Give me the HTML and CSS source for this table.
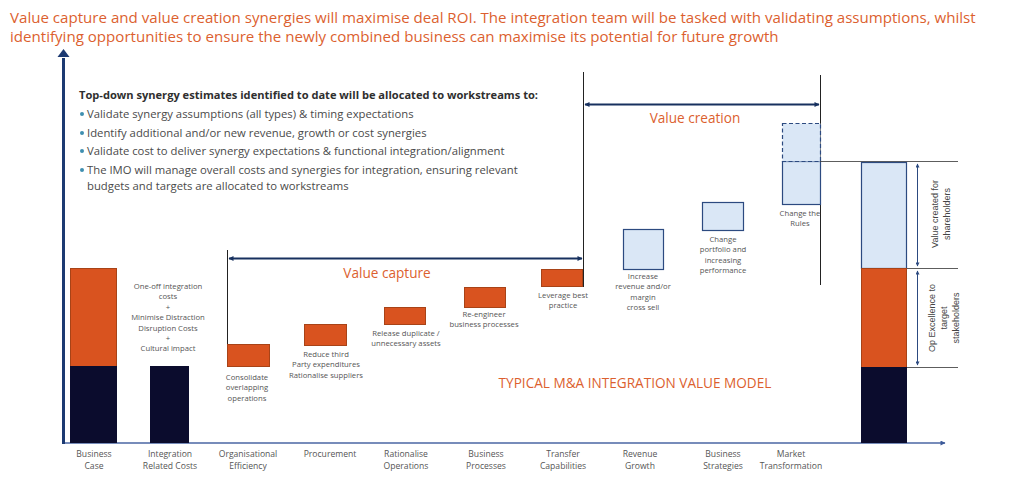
FILE: index.html
```html
<!DOCTYPE html>
<html lang="en">
<head>
<meta charset="utf-8">
<title>Typical M&amp;A Integration Value Model</title>
<link rel="stylesheet" href="styles.css">
</head>
<body>
<div class="page">
  <header class="headline">
    <p>Value capture and value creation synergies will maximise deal ROI. The integration team will be tasked with validating assumptions, whilst<br>identifying opportunities to ensure the newly combined business can maximise its potential for future growth</p>
  </header>
  <section class="chart">
    <svg class="canvas" width="1024" height="431" viewBox="0 0 1024 431" xmlns="http://www.w3.org/2000/svg">
      <defs>
        <marker id="ah" viewBox="0 0 10 10" refX="9" refY="5" markerWidth="7" markerHeight="5" orient="auto-start-reverse" markerUnits="userSpaceOnUse">
          <path d="M0,0 L10,5 L0,10 z" fill="#17305f"/>
        </marker>
        <marker id="ahs" viewBox="0 0 10 10" refX="9" refY="5" markerWidth="5" markerHeight="4" orient="auto-start-reverse" markerUnits="userSpaceOnUse">
          <path d="M0,0 L10,5 L0,10 z" fill="#2c4a80"/>
        </marker>
        <marker id="ax" viewBox="0 0 10 10" refX="9" refY="5" markerWidth="9" markerHeight="5" orient="auto" markerUnits="userSpaceOnUse">
          <path d="M0,0 L10,5 L0,10 z" fill="#3d5a99"/>
        </marker>
      </defs>

      <!-- x axis -->
      <line x1="62" y1="395" x2="945" y2="395" stroke="#4a66a3" stroke-width="1.4" marker-end="url(#ax)"/>
      <!-- y axis -->
      <line x1="63.5" y1="396" x2="63.5" y2="10" stroke="#1c3a72" stroke-width="3"/>
      <path d="M57.5,9 L63.5,1 L69.5,9 z" fill="#1c3a72"/>

      <!-- Business case -->
      <rect class="b-orange" x="70.5" y="220.5" width="46" height="98"/>
      <rect class="b-navy" x="70.5" y="318.5" width="46" height="76"/>
      <!-- Integration costs -->
      <rect class="b-navy" x="150.5" y="318.5" width="38" height="76"/>

      <!-- Value capture bracket -->
      <line x1="227.5" y1="202" x2="227.5" y2="319" stroke="#222" stroke-width="1"/>
      <line x1="229" y1="210.5" x2="582" y2="210.5" stroke="#17305f" stroke-width="2" marker-start="url(#ah)" marker-end="url(#ah)"/>

      <rect class="b-orange" x="227.5" y="296.5" width="42" height="22"/>
      <rect class="b-orange" x="304.5" y="276.5" width="42" height="21"/>
      <rect class="b-orange" x="384.5" y="259.5" width="41" height="17"/>
      <rect class="b-orange" x="464.5" y="239.5" width="41" height="20"/>
      <rect class="b-orange" x="541.5" y="221.5" width="41" height="17"/>

      <!-- Value creation bracket -->
      <line x1="583.5" y1="24" x2="583.5" y2="239" stroke="#222" stroke-width="1"/>
      <line x1="820.5" y1="27" x2="820.5" y2="237" stroke="#222" stroke-width="1"/>
      <line x1="585" y1="56.5" x2="819" y2="56.5" stroke="#17305f" stroke-width="2" marker-start="url(#ah)" marker-end="url(#ah)"/>

      <rect class="b-light" x="623.5" y="181.5" width="40" height="40"/>
      <rect class="b-light" x="702.5" y="154.5" width="41" height="28"/>
      <rect class="b-light" x="782.5" y="113.5" width="38" height="43"/>
      <rect class="b-light" x="782.5" y="75.5" width="38" height="38" stroke-dasharray="4 2.5"/>

      <!-- Right summary bar -->
      <line x1="820" y1="113.5" x2="958" y2="113.5" stroke="#333" stroke-width="0.8"/>
      <line x1="907" y1="220.5" x2="958" y2="220.5" stroke="#333" stroke-width="0.8"/>
      <line x1="907" y1="319.5" x2="958" y2="319.5" stroke="#333" stroke-width="0.8"/>
      <rect class="b-light" x="861.5" y="114.5" width="45" height="106"/>
      <rect class="b-orange" x="861.5" y="220.5" width="45" height="99"/>
      <rect class="b-navy" x="861.5" y="319.5" width="45" height="75"/>
      <line x1="917.5" y1="116" x2="917.5" y2="218" stroke="#2c4a80" stroke-width="1" marker-start="url(#ahs)" marker-end="url(#ahs)"/>
      <line x1="917.5" y1="223" x2="917.5" y2="317" stroke="#2c4a80" stroke-width="1" marker-start="url(#ahs)" marker-end="url(#ahs)"/>
    </svg>

    <div class="notes">
      <p class="notes-title">Top-down synergy estimates identified to date will be allocated to workstreams to:</p>
      <ul>
        <li>Validate synergy assumptions (all types) &amp; timing expectations</li>
        <li>Identify additional and/or new revenue, growth or cost synergies</li>
        <li>Validate cost to deliver synergy expectations &amp; functional integration/alignment</li>
        <li>The IMO will manage overall costs and synergies for integration, ensuring relevant budgets and targets are allocated to workstreams</li>
      </ul>
    </div>

    <div class="band-title t-capture">Value capture</div>
    <div class="band-title t-creation">Value creation</div>
    <div class="band-title t-model">TYPICAL M&amp;A INTEGRATION VALUE MODEL</div>

    <div class="note l-integration">One-off integration<br>costs<br>+<br>Minimise Distraction<br>Disruption Costs<br>+<br>Cultural impact</div>
    <div class="note l-consolidate">Consolidate<br>overlapping<br>operations</div>
    <div class="note l-reduce">Reduce third<br>Party expenditures<br>Rationalise suppliers</div>
    <div class="note l-release">Release duplicate /<br>unnecessary assets</div>
    <div class="note l-reengineer">Re-engineer<br>business processes</div>
    <div class="note l-leverage">Leverage best<br>practice</div>
    <div class="note l-increase">Increase<br>revenue and/or<br>margin<br>cross sell</div>
    <div class="note l-portfolio">Change<br>portfolio and<br>increasing<br>performance</div>
    <div class="note l-rules">Change the<br>Rules</div>

    <div class="side side-value">Value created for<br>shareholders</div>
    <div class="side side-opex">Op Excellence to<br>target<br>stakeholders</div>

    <div class="axis-labels">
      <span class="ax ax-1">Business<br>Case</span>
      <span class="ax ax-2">Integration<br>Related Costs</span>
      <span class="ax ax-3">Organisational<br>Efficiency</span>
      <span class="ax ax-4">Procurement</span>
      <span class="ax ax-5">Rationalise<br>Operations</span>
      <span class="ax ax-6">Business<br>Processes</span>
      <span class="ax ax-7">Transfer<br>Capabilities</span>
      <span class="ax ax-8">Revenue<br>Growth</span>
      <span class="ax ax-9">Business<br>Strategies</span>
      <span class="ax ax-10">Market<br>Transformation</span>
    </div>
  </section>
</div>
</body>
</html>
```

FILE: styles.css
```css
* { box-sizing: border-box; }

html, body {
  margin: 0;
  padding: 0;
  background: #ffffff;
}

body {
  font-family: "Open Sans", "Noto Sans", sans-serif;
  color: #444;
}

.page {
  width: 1024px;
  height: 479px;
  overflow: hidden;
}

.headline {
  height: 48px;
  padding: 8px 0 0 10px;
}

.headline p {
  margin: 0;
  font-size: 15.1px;
  line-height: 19px;
  color: #dc5f2f;
  white-space: nowrap;
}

.chart {
  position: relative;
  height: 431px;
}

.canvas {
  position: absolute;
  left: 0;
  top: 0;
  display: block;
}

.b-orange { fill: #d9531f; stroke: #a84317; stroke-width: 1; }
.b-navy { fill: #0b0c2d; stroke: #0b0c2d; stroke-width: 1; }
.b-light { fill: #dae7f6; stroke: #2c4a80; stroke-width: 1.2; }

.notes {
  position: relative;
  padding: 38px 0 0 79px;
}

.notes-title {
  margin: 0 0 3px;
  font-size: 11.1px;
  font-weight: 700;
  line-height: 17px;
  color: #2f2f2f;
}

.notes ul {
  margin: 0;
  padding: 0;
  list-style: none;
  width: 445px;
}

.notes li {
  position: relative;
  padding-left: 8px;
  font-size: 11.3px;
  line-height: 16px;
  color: #4a4a4a;
  margin-bottom: 2.5px;
}

.notes li::before {
  content: "";
  position: absolute;
  left: 1px;
  top: 6px;
  width: 4px;
  height: 4px;
  border-radius: 50%;
  background: #3f8fb0;
}

.band-title {
  position: absolute;
  transform: translateX(-50%);
  white-space: nowrap;
  font-size: 13.6px;
  line-height: 16px;
  color: #dc5f2f;
}

.t-capture { left: 387px; top: 217px; }
.t-creation { left: 695px; top: 62px; }
.t-model { left: 635px; top: 327px; }

.note {
  position: absolute;
  transform: translateX(-50%);
  white-space: nowrap;
  text-align: center;
  font-size: 7.7px;
  line-height: 10.4px;
  color: #555;
}

.l-integration { left: 168px; top: 233px; }
.l-consolidate { left: 247px; top: 324px; }
.l-reduce { left: 326px; top: 301px; }
.l-release { left: 406px; top: 280px; }
.l-reengineer { left: 484px; top: 261px; }
.l-leverage { left: 563px; top: 242px; }
.l-increase { left: 643px; top: 223px; }
.l-portfolio { left: 723px; top: 186px; }
.l-rules { left: 800px; top: 160px; }

.side {
  position: absolute;
  white-space: nowrap;
  text-align: center;
  font-family: "Liberation Sans", Arial, sans-serif;
  font-size: 9px;
  line-height: 12px;
  color: #444;
  transform: translate(-50%, -50%) rotate(-90deg);
}

.side-value { left: 941px; top: 166px; }
.side-opex { left: 944px; top: 270px; }

.axis-labels {
  position: absolute;
  left: 0;
  top: 400px;
  width: 100%;
}

.ax {
  position: absolute;
  top: 0;
  transform: translateX(-50%);
  white-space: nowrap;
  text-align: center;
  font-size: 8.6px;
  line-height: 12px;
  color: #555;
}

.ax-1 { left: 94px; }
.ax-2 { left: 170px; }
.ax-3 { left: 248px; }
.ax-4 { left: 330px; }
.ax-5 { left: 406px; }
.ax-6 { left: 486px; }
.ax-7 { left: 563px; }
.ax-8 { left: 640px; }
.ax-9 { left: 723px; }
.ax-10 { left: 791px; }
```
